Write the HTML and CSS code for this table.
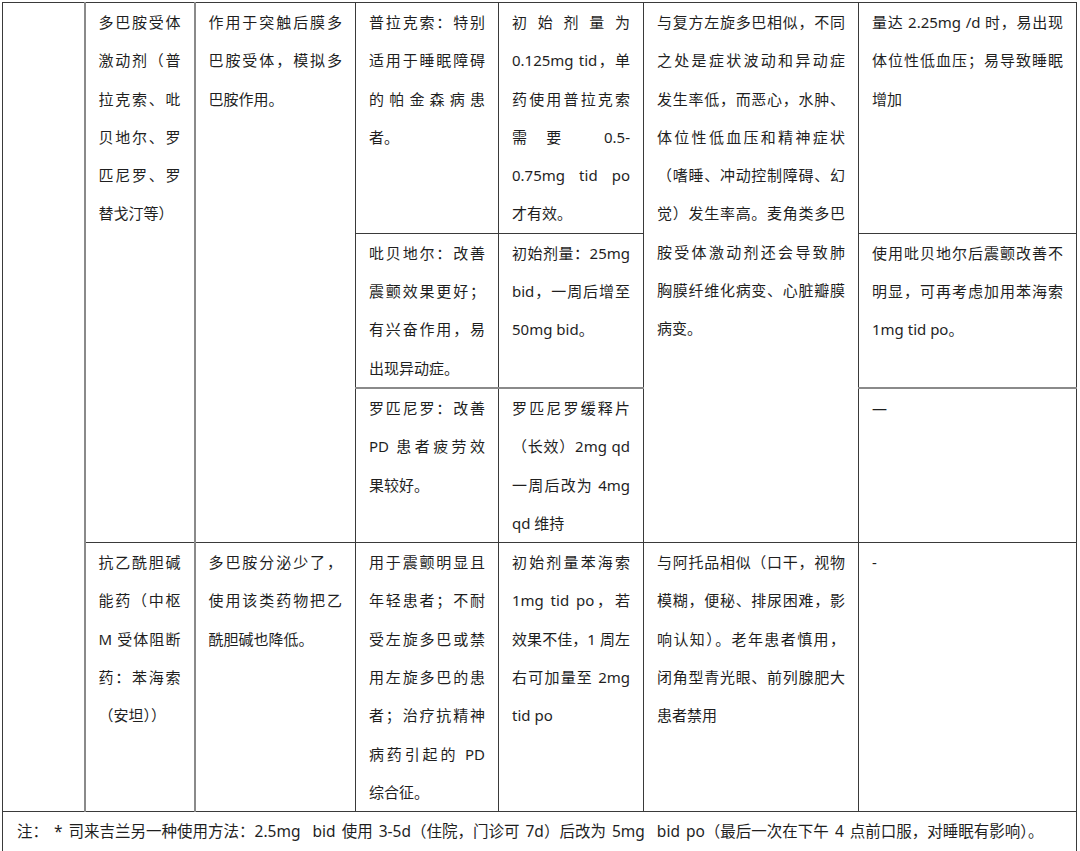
FILE: index.html
```html
<!DOCTYPE html>
<html lang="zh-CN">
<head>
<meta charset="utf-8">
<title>多巴胺受体激动剂与抗乙酰胆碱能药</title>
<link rel="stylesheet" href="styles.css">
</head>
<body>
<table class="drug-table">
  <colgroup>
    <col class="c0"><col class="c1"><col class="c2"><col class="c3"><col class="c4"><col class="c5"><col class="c6">
  </colgroup>
  <tbody>
    <tr class="row-a">
      <td class="cell blank" rowspan="4"></td>
      <td class="cell soft-left" rowspan="3">
        <span class="ln">多巴胺受体</span>
        <span class="ln">激动剂（普</span>
        <span class="ln">拉克索、吡</span>
        <span class="ln">贝地尔、罗</span>
        <span class="ln">匹尼罗、罗</span>
        <span class="ln">替戈汀等）</span>
      </td>
      <td class="cell soft-left" rowspan="3">
        <span class="ln">作用于突触后膜多</span>
        <span class="ln">巴胺受体，模拟多</span>
        <span class="ln">巴胺作用。</span>
      </td>
      <td class="cell">
        <span class="ln">普拉克索：特别</span>
        <span class="ln">适用于睡眠障碍</span>
        <span class="ln">的帕金森病患</span>
        <span class="ln">者。</span>
      </td>
      <td class="cell">
        <span class="ln">初始剂量为</span>
        <span class="ln">0.125mg tid，单</span>
        <span class="ln">药使用普拉克索</span>
        <span class="ln">需要 0.5-</span>
        <span class="ln">0.75mg tid po</span>
        <span class="ln">才有效。</span>
      </td>
      <td class="cell" rowspan="3">
        <span class="ln">与复方左旋多巴相似，不同</span>
        <span class="ln">之处是症状波动和异动症</span>
        <span class="ln">发生率低，而恶心，水肿、</span>
        <span class="ln">体位性低血压和精神症状</span>
        <span class="ln">（嗜睡、冲动控制障碍、幻</span>
        <span class="ln">觉）发生率高。麦角类多巴</span>
        <span class="ln">胺受体激动剂还会导致肺</span>
        <span class="ln">胸膜纤维化病变、心脏瓣膜</span>
        <span class="ln">病变。</span>
      </td>
      <td class="cell">
        <span class="ln">量达 2.25mg /d 时，易出现</span>
        <span class="ln">体位性低血压；易导致睡眠</span>
        <span class="ln">增加</span>
      </td>
    </tr>
    <tr class="row-b">
      <td class="cell">
        <span class="ln">吡贝地尔：改善</span>
        <span class="ln">震颤效果更好；</span>
        <span class="ln">有兴奋作用，易</span>
        <span class="ln">出现异动症。</span>
      </td>
      <td class="cell">
        <span class="ln">初始剂量：25mg</span>
        <span class="ln">bid，一周后增至</span>
        <span class="ln">50mg bid。</span>
      </td>
      <td class="cell">
        <span class="ln">使用吡贝地尔后震颤改善不</span>
        <span class="ln">明显，可再考虑加用苯海索</span>
        <span class="ln">1mg tid po。</span>
      </td>
    </tr>
    <tr class="row-c">
      <td class="cell">
        <span class="ln">罗匹尼罗：改善</span>
        <span class="ln">PD 患者疲劳效</span>
        <span class="ln">果较好。</span>
      </td>
      <td class="cell">
        <span class="ln">罗匹尼罗缓释片</span>
        <span class="ln">（长效）2mg qd</span>
        <span class="ln">一周后改为 4mg</span>
        <span class="ln">qd 维持</span>
      </td>
      <td class="cell">
        <span class="ln">—</span>
      </td>
    </tr>
    <tr class="row-d">
      <td class="cell soft-left">
        <span class="ln">抗乙酰胆碱</span>
        <span class="ln">能药（中枢</span>
        <span class="ln">M 受体阻断</span>
        <span class="ln">药：苯海索</span>
        <span class="ln">（安坦））</span>
      </td>
      <td class="cell soft-left">
        <span class="ln">多巴胺分泌少了，</span>
        <span class="ln">使用该类药物把乙</span>
        <span class="ln">酰胆碱也降低。</span>
      </td>
      <td class="cell">
        <span class="ln">用于震颤明显且</span>
        <span class="ln">年轻患者；不耐</span>
        <span class="ln">受左旋多巴或禁</span>
        <span class="ln">用左旋多巴的患</span>
        <span class="ln">者；治疗抗精神</span>
        <span class="ln">病药引起的 PD</span>
        <span class="ln">综合征。</span>
      </td>
      <td class="cell">
        <span class="ln">初始剂量苯海索</span>
        <span class="ln">1mg tid po，若</span>
        <span class="ln">效果不佳，1 周左</span>
        <span class="ln">右可加量至 2mg</span>
        <span class="ln">tid po</span>
      </td>
      <td class="cell">
        <span class="ln">与阿托品相似（口干，视物</span>
        <span class="ln">模糊，便秘、排尿困难，影</span>
        <span class="ln">响认知）。老年患者慎用，</span>
        <span class="ln">闭角型青光眼、前列腺肥大</span>
        <span class="ln">患者禁用</span>
      </td>
      <td class="cell">
        <span class="ln">-</span>
      </td>
    </tr>
    <tr class="row-note">
      <td class="cell note" colspan="7">
        <span class="ln">注： * 司来吉兰另一种使用方法：2.5mg&nbsp; bid 使用 3-5d（住院，门诊可 7d）后改为 5mg&nbsp; bid po（最后一次在下午 4 点前口服，对睡眠有影响）。</span>
      </td>
    </tr>
  </tbody>
</table>
</body>
</html>
```
FILE: styles.css
```css
html, body {
  margin: 0;
  padding: 0;
  background: #ffffff;
}

body {
  font-family: "Noto Sans", "Noto Sans CJK SC", sans-serif;
  font-size: 15px;
  color: #1f1f1f;
}

.drug-table {
  border-collapse: collapse;
  table-layout: fixed;
  width: 1075px;
  margin: 2px 0 0 2px;
}

.c0 { width: 82px; }
.c1 { width: 110px; }
.c2 { width: 161px; }
.c3 { width: 143px; }
.c4 { width: 145px; }
.c5 { width: 215px; }
.c6 { width: 218px; }

.cell {
  border: 1px solid #3a3a3a;
  padding: 0 13px;
  vertical-align: top;
}

.cell.soft-left {
  border-left: 2px solid #8a8a8a;
}

.row-c .cell {
  border-top: 2px solid #8a8a8a;
}

.ln {
  display: block;
  height: 38.3px;
  line-height: 38.3px;
  white-space: nowrap;
  text-align: justify;
  text-align-last: justify;
}

.ln:last-child {
  text-align-last: auto;
}

.note {
  padding-left: 14px;
  font-size: 15.5px;
  word-spacing: 2px;
}
```
